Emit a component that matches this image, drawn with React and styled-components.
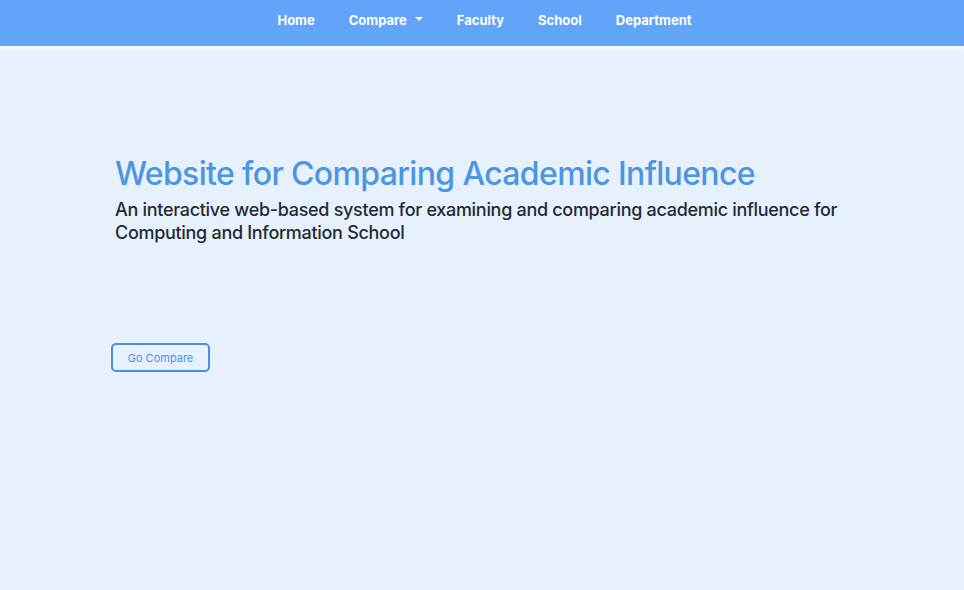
import styled, { createGlobalStyle } from "styled-components";

const GlobalStyle = createGlobalStyle`
  html, body {
    margin: 0;
    padding: 0;
    background: #e7f1fe;
    font-family: Inter, "Noto Sans", sans-serif;
  }
`;

const Page = styled.div`
  min-height: 590px;
  background: #e7f1fe;
`;

const NavBar = styled.nav`
  height: 46px;
  box-sizing: border-box;
  padding: 0 0 6px 5px;
  background: #62a4f7;
  display: flex;
  justify-content: center;
  align-items: center;
  box-shadow: 0 3px 4px rgba(255, 255, 255, 0.8);
`;

const NavLink = styled.a`
  color: #ffffff;
  font-size: 13px;
  font-weight: 700;
  padding: 0 17px;
  text-decoration: none;
  display: flex;
  align-items: center;
  cursor: pointer;
`;

const Caret = styled.span`
  display: inline-block;
  width: 0;
  height: 0;
  margin-left: 8px;
  border-top: 4px solid #ffffff;
  border-left: 4px solid transparent;
  border-right: 4px solid transparent;
  transform: translateY(-1px);
`;

const Hero = styled.section`
  padding: 108px 0 0 115px;
`;

const Title = styled.h1`
  margin: 0;
  color: #4a96e2;
  font-size: 32px;
  font-weight: 500;
  letter-spacing: -0.65px;
  line-height: 40px;
`;

const Subtitle = styled.p`
  margin: 4px 0 0;
  color: #232a33;
  font-size: 18px;
  font-weight: 500;
  letter-spacing: -0.3px;
  line-height: 23px;
  max-width: 740px;
`;

const Actions = styled.div`
  padding: 99px 0 0 111px;
`;

const Button = styled.button`
  width: 99px;
  height: 29px;
  border: 2px solid #4a90e2;
  border-radius: 5px;
  background: transparent;
  color: #4a90e2;
  font-family: Inter, "Noto Sans", sans-serif;
  font-size: 11px;
  cursor: pointer;
`;

export default function App() {
  return (
    <Page>
      <GlobalStyle />
      <NavBar>
        <NavLink>Home</NavLink>
        <NavLink>
          Compare
          <Caret />
        </NavLink>
        <NavLink>Faculty</NavLink>
        <NavLink>School</NavLink>
        <NavLink>Department</NavLink>
      </NavBar>
      <Hero>
        <Title>Website for Comparing Academic Influence</Title>
        <Subtitle>
          An interactive web-based system for examining and comparing academic
          influence for Computing and Information School
        </Subtitle>
      </Hero>
      <Actions>
        <Button>Go Compare</Button>
      </Actions>
    </Page>
  );
}
